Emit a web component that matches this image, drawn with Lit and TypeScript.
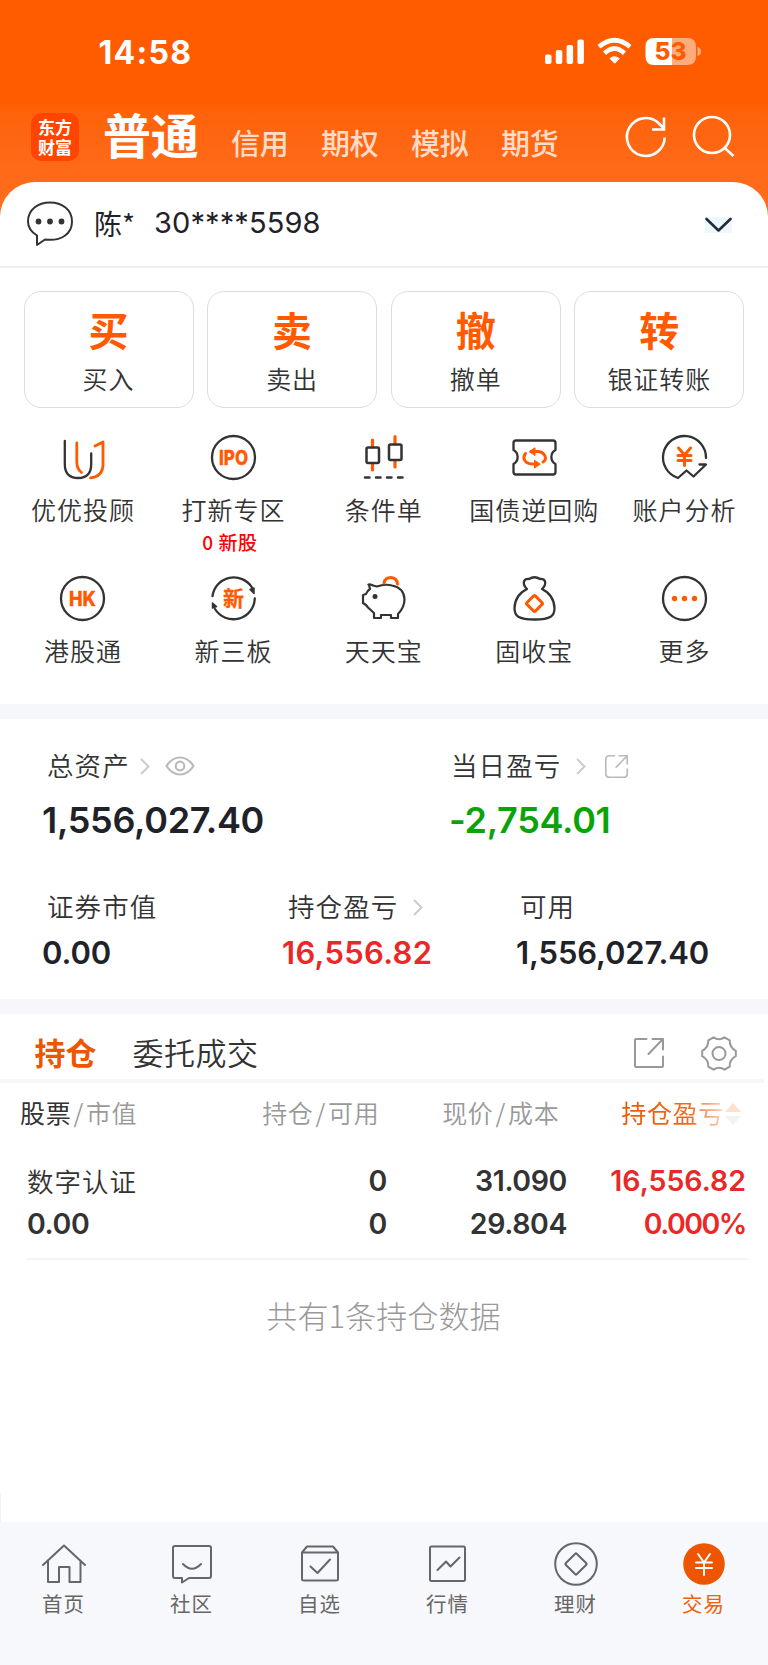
import { LitElement, html, svg, css, TemplateResult } from "lit";
import { customElement } from "lit/decorators.js";

const icons: Record<string, TemplateResult> = {
  uu: svg`<path d="M4.800 6V29C4.800 38 9 43 18 43S31.200 38 31.200 29V18.500" stroke="#333"/><path d="M16.800 8V27Q16.800 34 21.500 37.500" stroke="#ff5a00" stroke-width="2.800"/><path d="M35 11 43 7V29Q43 41.500 30.500 42.800" stroke="#ff5a00" stroke-width="2.800"/>`,
  ipo: svg`<circle cx="22.500" cy="22.500" r="21.500" stroke="#333"/><text class="g" x="22.500" y="29.600" textLength="29" lengthAdjust="spacingAndGlyphs" font-size="19.500">IPO</text>`,
  cond: svg`<path d="M11.500 5V12M11.500 29V35M34 1.500V9M34 26V32" stroke="#ff5a00" stroke-width="3.200"/><rect x="5.500" y="12.500" width="12.500" height="15.500" rx="1.500" stroke="#333" stroke-width="2.500"/><rect x="28" y="9.500" width="12.500" height="15.500" rx="1.500" stroke="#333" stroke-width="2.500"/><path d="M4 42.500H8.500M15 42.500H19.500M26 42.500H30.500M37 42.500H41.500" stroke="#333" stroke-width="2.500"/>`,
  ticket: svg`<path d="M4 5.500H41Q43.500 5.500 43.500 8V15C38 18 38 26 43.500 29V37Q43.500 39.500 41 39.500H4Q1.500 39.500 1.500 37V29C7 26 7 18 1.500 15V8Q1.500 5.500 4 5.500Z" stroke="#333"/><path d="M13.500 18.500Q10 23 14 27Q16 29 21 29M19 16.500H25Q31 16.500 33 21Q34.500 25 31 27" stroke="#ff5a00" stroke-width="3"/><path d="M17.500 16.500 23 12.800V20.200ZM28 29 22.500 25.300V32.700Z" fill="#ff5a00" stroke="#ff5a00" stroke-width="1"/>`,
  analysis: svg`<path d="M44 23A21.500 21.500 0 1 0 16 43L24.500 35.500 31.500 41.500 44 29.500H37.500" stroke="#333"/><path d="M16.500 13 22.500 20 28.500 13M22.500 20V30.500M16 20.500H29M16 25.500H29" stroke="#ff5a00" stroke-width="3"/>`,
  hk: svg`<circle cx="22.500" cy="22.500" r="21.500" stroke="#333"/><text class="g" x="22.500" y="29.600" textLength="27" lengthAdjust="spacingAndGlyphs" font-size="19.500">HK</text>`,
  xin: svg`<path d="M1.500 20A21.500 21.500 0 0 1 41 11.500M43.800 22.500A21.500 21.500 0 0 1 4 33" stroke="#333"/><path d="M39 13.500 43 12V17.500ZM1.500 32V27L5.500 30.500Z" fill="#333" stroke="#333" stroke-width="1.500"/><text class="g cn" x="22.500" y="30" font-size="21">新</text>`,
  pig: svg`<path d="M8 9C6 8 10 8 12 9.500L16 10.500C20 9 27 8.500 31 9.500 39 11 43 16 43.500 23 43.500 30 41 34 37 38V42H30V39H20V42H13V37L7 31.500 5 29 2 27V19L5 18Q6 15 9 13Z" stroke="#333" stroke-width="2.200"/><circle cx="14" cy="20.500" r="2.500" fill="#333"/><path d="M23 7Q24 1.500 30 1.500Q36 2 36.500 8" stroke="#ff5a00" stroke-width="3"/>`,
  bag: svg`<path d="M15 13C10 8 11 2.500 17 3Q22.500-.5 28 3C34 2.500 35 8 30 13Q42 19 42.500 32C42.500 40 39 43.500 22.500 43.500S2.500 40 2.500 32Q3 19 15 13Z" stroke="#333"/><rect x="16.500" y="21.500" width="12" height="12" rx="1.500" transform="rotate(45 22.500 27.500)" stroke="#ff5a00" stroke-width="3"/>`,
  more: svg`<circle cx="22.500" cy="22.500" r="21.500" stroke="#333"/><g fill="#ff5a00"><circle cx="12.500" cy="22.500" r="2.700"/><circle cx="22.500" cy="22.500" r="2.700"/><circle cx="32.500" cy="22.500" r="2.700"/></g>`,
  home: svg`<path d="M1 22 22 2.500 43 22M6 18V39H17V24H27.500V39H38.500V18"/>`,
  social: svg`<path d="M5 3H39Q41 3 41 5V33Q41 35 39 35H19L12 39.500V35H5Q3 35 3 33V5Q3 3 5 3Z"/><path d="M13 21Q22 30.500 31 21"/>`,
  picks: svg`<path d="M4 9.500 9 3.500H35L40 9.500V36Q40 37.500 38 37.500H6Q4 37.500 4 36ZM4 9.500H40"/><path d="M12.500 23.500 19.500 30 32 16.500"/>`,
  chart: svg`<rect x="4" y="3.500" width="35" height="34.500" rx="1.500"/><path d="M11.500 27 20 18.500 24.500 23.500 33.500 14.500"/>`,
  wealth: svg`<circle cx="22" cy="21" r="20.800"/><rect x="14.200" y="13.200" width="15.600" height="15.600" rx="1" transform="rotate(45 22 21)"/>`,
  trade: svg`<circle cx="22" cy="21" r="20.800" fill="#ee5500" stroke="none"/><path d="M16 11 22 19.500 28 11M22 19.500V32M14 19.500H30M14 25H30" stroke="#fff" stroke-width="2"/>`,
};

const chev = html`<svg class="chev" width="10" height="17" viewBox="0 0 10 17"><path d="M1 1 8.500 8.500 1 16" /></svg>`;

@customElement("app-root")
export class AppRoot extends LitElement {
  static styles = css`
    :host { display: block; width: 768px; height: 1665px; overflow: hidden; background: #fff; color: #333;
      font-family: "Noto Sans CJK SC", sans-serif; }
    * { box-sizing: border-box; }
    svg { display: block; flex: none; fill: none; overflow: visible; stroke-linecap: round; stroke-linejoin: round; }
    .n { font-family: Inter, sans-serif; }
    .hero { height: 218px; background: linear-gradient(#ff5c00 0, #ff5c00 104px, #ff620b 112px, #ff6a18 170px, #ff6d1c 218px); color: #fff; }
    .status { height: 104px; display: flex; align-items: center; padding: 0 67px 0 98.500px; }
    .time { flex: 1; font: 700 32px/40px Inter, sans-serif; letter-spacing: 1.300px; padding-top: 2px; }
    .nav { height: 66px; display: flex; align-items: flex-start; padding: 9px 33px 0 31px; }
    .logo { width: 48px; height: 48px; border-radius: 10px; background: #ff4500; padding: 4px 0 0; text-align: center; font-size: 17px; line-height: 19.500px; font-weight: 700; }
    .cur { margin: -10px 0 0 24px; font-size: 48px; line-height: 60px; font-weight: 700; width: 102px; letter-spacing: -.3px; white-space: nowrap; }
    .mode { margin-top: 9px; width: 90px; font-size: 29px; line-height: 40px; font-weight: 500; color: #ffdcc8; letter-spacing: -.3px; }
    .modes { display: flex; flex: 1; padding-left: 26px; }
    .nav svg { margin-top: 3px; stroke: #fff; stroke-width: 2.600; stroke-linecap: butt; stroke-linejoin: miter; }
    .nav .search { margin-left: 27px; }
    .account { margin-top: -36px; height: 86px; border-radius: 35px 35px 0 0; background: #fff; border-bottom: 2px solid #eee; display: flex; align-items: center; padding: 0 36px 0 27px; color: #1f2329; }
    .name { margin-left: 21px; width: 60px; font-size: 28px; font-weight: 400; line-height: 40px; margin-top: -2px; }
    .id { flex: 1; font-size: 29px; line-height: 40px; font-weight: 400; margin-top: -2px; letter-spacing: .1px; }
    .drop { background: #eef7ff; width: 27px; height: 16px; margin-top: 1px; }
    .actions { display: grid; grid-template-columns: repeat(4, 170px); gap: 13.600px; padding: 23px 0 0 23.500px; }
    .card { height: 117px; border: 1.500px solid #ddd; border-radius: 17px; text-align: center; }
    .big { height: 76px; padding-top: 7px; font-size: 40px; line-height: 60px; font-weight: 700; color: #ff5a00; }
    .small { margin-top: -10px; font-size: 25px; line-height: 40px; letter-spacing: .9px; font-weight: 350; }
    .grid { display: grid; grid-template-columns: repeat(5, 150.400px); padding: 27px 0 0 7.800px; height: 296px; grid-auto-rows: 141px; }
    .cell { display: flex; flex-direction: column; align-items: center; font-size: 25px; line-height: 36px; letter-spacing: 1px; font-weight: 350; white-space: nowrap; }
    .cell svg { stroke-width: 2.300; margin-bottom: 11px; margin-top: -.5px; }
    .g { fill: #ff5a00; stroke: #ff5a00; stroke-width: .3px; font-family: Inter, sans-serif; font-weight: 800; text-anchor: middle; letter-spacing: 0; }
    .cn { font-family: "Noto Sans CJK SC", sans-serif; font-weight: 700; }
    .red { font-size: 19px; line-height: 24px; color: #f00; font-weight: 500; letter-spacing: .6px; padding-right: 7px; margin-top: 3px; }
    .band { height: 15px; background: #f6f7fa; }
    .assets { height: 280px; padding-top: 25px; }
    .row { display: grid; }
    .two { grid-template-columns: 407px 1fr; padding-left: 42px; height: 137px; }
    .three { grid-template-columns: 240px 234px 1fr; padding-left: 42px; padding-top: 4px; }
    .lbl { display: flex; align-items: center; height: 40px; padding-left: 5px; font-size: 26.500px; letter-spacing: 1.100px; font-weight: 350; white-space: nowrap; }
    .two > div:nth-child(2) .lbl { padding-left: 2px; }
    .three > div:nth-child(2) .lbl { padding-left: 6px; }
    .three > div:nth-child(3) .lbl { padding-left: 4px; }
    .chev { stroke: #ccc; stroke-width: 2; margin: 4px 0 0 10px; stroke-linecap: butt; }
    .gapch .chev { margin-left: 15px; }
    .eye { stroke: #bbb; stroke-width: 2.200; margin: 4px 0 0 15px; }
    .out { stroke: #bbb; stroke-width: 2.200; margin: 5px 0 0 19px; }
    .v1 { font: 600 36px/48px Inter, sans-serif; color: #1f2329; margin-top: 12px; letter-spacing: -.3px; }
    .v2 { font: 600 31px/40px Inter, sans-serif; color: #1f2329; margin-top: 8px; white-space: nowrap; letter-spacing: -.1px; }
    .green { color: #0aa30a; }
    .rd { color: #ea2828; }
    .v2.rd { letter-spacing: .3px; }
    .tabs { height: 69px; border-bottom: 4px solid #f7f7f7; margin-right: 4px; display: flex; align-items: center; padding: 11px 27px 0 34.500px; font-size: 31px; line-height: 44px; font-weight: 350; }
    .on { font-weight: 700; color: #ee5500; width: 98px; }
    .tab { flex: 1; letter-spacing: .5px; }
    .tabs .out, .tabs .gear { stroke: #999; stroke-width: 2; margin-top: 2px; }
    .tabs .gear { margin-left: 37.500px; }
    .heads { height: 64px; display: grid; grid-template-columns: 137px 222.500px 180px 1fr; padding: 9px 27px 0 20px; font-size: 25px; line-height: 40px; font-weight: 350; color: #999; letter-spacing: .7px; white-space: nowrap; }
    .heads span { text-align: right; }
    .heads span:first-child { text-align: left; }
    .heads b { font-weight: 400; color: #333; }
    .heads i { font-style: normal; padding: 0 2px; }
    .pl { display: flex; justify-content: flex-end; }
    .fade { font-weight: 400; background: linear-gradient(90deg, #ee5500 0, #f06a20 66%, #fbd3bd 100%); background-clip: text; -webkit-background-clip: text; color: transparent; }
    .sort { margin: 11px 0 0 1px; }
    .hold { margin: 0 20px 0 27px; height: 113px; border-bottom: 2px solid #f5f5f5; padding-top: 14px; display: grid; grid-template-columns: 122px 238px 180px 179px; grid-auto-rows: 43px; font: 600 28.500px/40px Inter, sans-serif; letter-spacing: -.4px; }
    .hold span { text-align: right; }
    .hold .l { text-align: left; }
    .hold .rd { letter-spacing: 0; }
    .hold .pct { letter-spacing: -1.500px; }
    .hold .cnm { font-family: "Noto Sans CJK SC", sans-serif; font-weight: 350; font-size: 26.500px; letter-spacing: 1px; }
    .total { text-align: center; margin-top: 32px; height: 201px; font-size: 31px; line-height: 46px; font-weight: 300; color: #999; padding-right: 1px; letter-spacing: .1px; }
    .edge { width: 1px; height: 29px; background: #f2f3f6; }
    .bar { height: 144px; background: #f7f8fb; display: grid; grid-template-columns: repeat(6, 128px); padding-top: 21px; }
    .item { display: flex; flex-direction: column; align-items: center; font-size: 20.500px; line-height: 30px; color: #666; letter-spacing: 1px; }
    .item span { padding-right: 1px; }
    .item svg { stroke: #666; stroke-width: 2; margin-bottom: 3px; }
    .act { color: #f2600c; }
  `;

  private out(size: number, r: number) {
    return html`<svg class="out" width=${size} height=${size} viewBox="0 0 30 30"><path d="M12.500 1H${1 + r}Q1 1 1 ${1 + r}V${29 - r}Q1 29 ${1 + r} 29H${29 - r}Q29 29 29 ${29 - r}V18.500M18.500 1H29V11.500M29 1 14.500 16" /></svg>`;
  }

  render() {
    const cells = [["uu", "优优投顾"], ["ipo", "打新专区"], ["cond", "条件单"], ["ticket", "国债逆回购"], ["analysis", "账户分析"], ["hk", "港股通"], ["xin", "新三板"], ["pig", "天天宝"], ["bag", "固收宝"], ["more", "更多"]];
    const tabs = [["home", "首页"], ["social", "社区"], ["picks", "自选"], ["chart", "行情"], ["wealth", "理财"], ["trade", "交易"]];
    return html`
      <div class="hero">
        <div class="status">
          <span class="time">14:58</span>
          <svg width="156" height="28" viewBox="0 0 156 28">
            <g fill="#fff"><rect y="16.500" width="6.500" height="9.500" rx="2"/><rect x="10.800" y="12" width="6.500" height="14" rx="2"/><rect x="21.600" y="7" width="6.500" height="19" rx="2"/><rect x="32.400" y="1.500" width="6.500" height="24.500" rx="2"/>
            <path d="M69.500 25 65 20.500Q69.500 17 74 20.500Z" stroke="#fff" stroke-width="1"/></g>
            <path d="M54 8.800Q69.500-4.300 85 8.800M59.500 15.200Q69.500 6.200 79.500 15.200" stroke="#fff" stroke-width="4.600" stroke-linecap="butt"/>
            <path d="M109 0H127V27H109Q100.500 27 100.500 18.500V8.500Q100.500 0 109 0Z" fill="#fff"/>
            <path d="M127 0H142.500Q151 0 151 8.500V18.500Q151 27 142.500 27H127ZM152.500 9Q156 10 156 13.500T152.500 18Z" fill="#ffac7c"/>
            <text class="n" x="125.500" y="22.300" text-anchor="middle" font-size="24.500" font-weight="800" fill="#ff5c00">53</text>
          </svg>
        </div>
        <div class="nav">
          <div class="logo">东方<br>财富</div>
          <div class="cur">普通</div>
          <div class="modes"><span class="mode">信用</span><span class="mode">期权</span><span class="mode">模拟</span><span class="mode">期货</span></div>
          <svg width="40" height="42" viewBox="0 0 40 42"><path d="M38.700 21.500A18.900 18.900 0 1 1 32.500 7L38 12.500M38 1.500V13.500H26"/></svg>
          <svg class="search" width="42" height="42" viewBox="0 0 42 42"><circle cx="19" cy="19" r="18"/><path d="M31 31.500 40.500 40"/></svg>
        </div>
      </div>
      <div class="account">
        <svg width="46" height="46" viewBox="0 0 46 46" stroke="#333" stroke-width="2"><path d="M10 44V34.500Q1 29 1 20.500C1 8.500 11 1.500 23 1.500S45 8.500 45 20.500 35 40.500 18 38.500Z"/><g fill="#333" stroke="none"><circle cx="11.500" cy="20.500" r="2.900"/><circle cx="23" cy="20.500" r="2.900"/><circle cx="34.500" cy="20.500" r="2.900"/></g></svg>
        <span class="name">陈*</span><span class="id n">30****5598</span>
        <svg class="drop" viewBox="0 0 27 16" stroke="#222d38" stroke-width="2.600"><path d="M1.500 2 13.500 13.500 25.500 2"/></svg>
      </div>
      <div class="actions">
        ${[["买", "买入"], ["卖", "卖出"], ["撤", "撤单"], ["转", "银证转账"]].map(([a, b]) => html`<div class="card"><div class="big">${a}</div><div class="small">${b}</div></div>`)}
      </div>
      <div class="grid">
        ${cells.map(([i, t]) => html`<div class="cell"><svg width="45" height="45" viewBox="0 0 45 45">${icons[i]}</svg><span>${t}</span>${i === "ipo" ? html`<span class="red">0 新股</span>` : ""}</div>`)}
      </div>
      <div class="band"></div>
      <div class="assets">
        <div class="row two">
          <div><div class="lbl">总资产${chev}<svg class="eye" width="30" height="20" viewBox="0 0 30 20"><path d="M1.500 10Q7 1.500 15 1.500T28.500 10Q23 18.500 15 18.500T1.500 10Z"/><circle cx="15" cy="10" r="4.300"/></svg></div><div class="v1">1,556,027.40</div></div>
          <div><div class="lbl">当日盈亏<span class="gapch">${chev}</span>${this.out(23, 5)}</div><div class="v1 green">-2,754.01</div></div>
        </div>
        <div class="row three">
          <div><div class="lbl">证券市值</div><div class="v2">0.00</div></div>
          <div><div class="lbl">持仓盈亏<span class="gapch">${chev}</span></div><div class="v2 rd">16,556.82</div></div>
          <div><div class="lbl">可用</div><div class="v2">1,556,027.40</div></div>
        </div>
      </div>
      <div class="band"></div>
      <div class="tabs">
        <span class="on">持仓</span><span class="tab">委托成交</span>
        ${this.out(30, 1)}
        <svg class="gear" width="36" height="35" viewBox="0 0 36 35"><path d="M12.500 1.300Q18 5 23.500 1.300L28.700 4.300Q28.500 11.500 34.800 14.800V20.200Q28.500 23.500 28.700 30.700L23.500 33.700Q18 30 12.500 33.700L7.300 30.700Q7.500 23.500 1.200 20.200V14.800Q7.500 11.500 7.300 4.300Z"/><circle cx="18" cy="17.500" r="6.500"/></svg>
      </div>
      <div class="heads">
        <span><b>股票</b><i>/</i>市值</span><span>持仓<i>/</i>可用</span><span>现价<i>/</i>成本</span>
        <span class="pl"><span class="fade">持仓盈亏</span><svg class="sort" width="16" height="22" viewBox="0 0 16 22"><path d="M8 0 16 9H0Z" fill="#fde0d0"/><path d="M8 22 0 13H16Z" fill="#f2f2f2"/></svg></span>
      </div>
      <div class="hold">
        <span class="l cnm">数字认证</span><span>0</span><span>31.090</span><span class="rd">16,556.82</span>
        <span class="l">0.00</span><span>0</span><span>29.804</span><span class="rd pct">0.000%</span>
      </div>
      <div class="total">共有1条持仓数据</div>
      <div class="edge"></div>
      <div class="bar">
        ${tabs.map(([i, t]) => html`<div class="item ${i === "trade" ? "act" : ""}"><svg width="44" height="42" viewBox="0 0 44 42">${icons[i]}</svg><span>${t}</span></div>`)}
      </div>`;
  }
}
